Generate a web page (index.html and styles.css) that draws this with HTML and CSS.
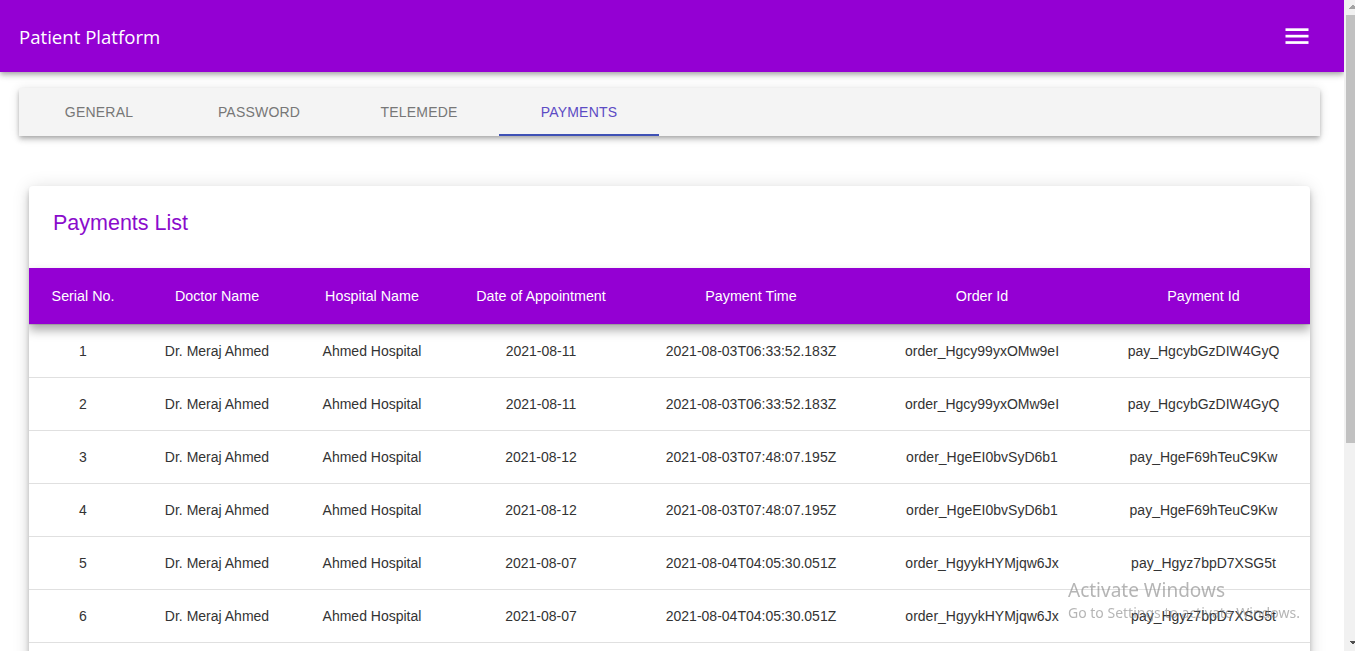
FILE: index.html
```html
<!DOCTYPE html>
<html lang="en">
<head>
<meta charset="utf-8">
<title>Patient Platform</title>
<link rel="stylesheet" href="styles.css">
</head>
<body>
<header class="topbar">
  <div class="brand">Patient Platform</div>
  <button class="menu-btn" aria-label="menu">
    <svg width="24" height="24" viewBox="0 0 24 24"><rect x="0.5" y="5.3" width="23" height="2.7" fill="#fff"/><rect x="0.5" y="11.8" width="23" height="2.7" fill="#fff"/><rect x="0.5" y="18.2" width="23" height="2.7" fill="#fff"/></svg>
  </button>
</header>
<main class="content">
  <nav class="tabs">
    <div class="tab">General</div>
    <div class="tab">Password</div>
    <div class="tab">Telemede</div>
    <div class="tab active">Payments</div>
  </nav>
  <section class="card">
    <h2 class="card-title">Payments List</h2>
    <table class="ptable">
      <colgroup>
        <col class="c1"><col class="c2"><col class="c3"><col class="c4"><col class="c5"><col class="c6"><col class="c7">
      </colgroup>
      <thead>
        <tr><th>Serial No.</th><th>Doctor Name</th><th>Hospital Name</th><th>Date of Appointment</th><th>Payment Time</th><th>Order Id</th><th>Payment Id</th></tr>
      </thead>
      <tbody>
        <tr><td>1</td><td>Dr. Meraj Ahmed</td><td>Ahmed Hospital</td><td>2021-08-11</td><td>2021-08-03T06:33:52.183Z</td><td>order_Hgcy99yxOMw9eI</td><td>pay_HgcybGzDIW4GyQ</td></tr>
        <tr><td>2</td><td>Dr. Meraj Ahmed</td><td>Ahmed Hospital</td><td>2021-08-11</td><td>2021-08-03T06:33:52.183Z</td><td>order_Hgcy99yxOMw9eI</td><td>pay_HgcybGzDIW4GyQ</td></tr>
        <tr><td>3</td><td>Dr. Meraj Ahmed</td><td>Ahmed Hospital</td><td>2021-08-12</td><td>2021-08-03T07:48:07.195Z</td><td>order_HgeEI0bvSyD6b1</td><td>pay_HgeF69hTeuC9Kw</td></tr>
        <tr><td>4</td><td>Dr. Meraj Ahmed</td><td>Ahmed Hospital</td><td>2021-08-12</td><td>2021-08-03T07:48:07.195Z</td><td>order_HgeEI0bvSyD6b1</td><td>pay_HgeF69hTeuC9Kw</td></tr>
        <tr><td>5</td><td>Dr. Meraj Ahmed</td><td>Ahmed Hospital</td><td>2021-08-07</td><td>2021-08-04T04:05:30.051Z</td><td>order_HgyykHYMjqw6Jx</td><td>pay_Hgyz7bpD7XSG5t</td></tr>
        <tr><td>6</td><td>Dr. Meraj Ahmed</td><td>Ahmed Hospital</td><td>2021-08-07</td><td>2021-08-04T04:05:30.051Z</td><td>order_HgyykHYMjqw6Jx</td><td>pay_Hgyz7bpD7XSG5t</td></tr>
        <tr><td>7</td><td>Dr. Meraj Ahmed</td><td>Ahmed Hospital</td><td>2021-08-07</td><td>2021-08-04T04:05:30.051Z</td><td>order_HgyykHYMjqw6Jx</td><td>pay_Hgyz7bpD7XSG5t</td></tr>
        <tr><td>8</td><td>Dr. Meraj Ahmed</td><td>Ahmed Hospital</td><td>2021-08-07</td><td>2021-08-04T04:05:30.051Z</td><td>order_HgyykHYMjqw6Jx</td><td>pay_Hgyz7bpD7XSG5t</td></tr>
      </tbody>
    </table>
  </section>
</main>
<div class="activate">
  <div class="activate-title">Activate Windows</div>
  <div class="activate-sub">Go to Settings to activate Windows.</div>
</div>
<div class="scrollbar" aria-hidden="true">
  <div class="sb-up"></div>
  <div class="sb-thumb"></div>
  <div class="sb-down"></div>
</div>
</body>
</html>
```

FILE: styles.css
```css
* { box-sizing: border-box; }
html, body {
  margin: 0;
  padding: 0;
}
body {
  padding: 0 11px 40px 0;
  background: #fff;
  font-family: "Liberation Sans", Arial, sans-serif;
  color: #333;
}

.topbar {
  height: 72px;
  background: #9400d3;
  display: flex;
  align-items: center;
  justify-content: space-between;
  padding: 0 35px 0 19px;
  box-shadow: 0 2px 4px -1px rgba(0,0,0,.2), 0 4px 5px 0 rgba(0,0,0,.14), 0 1px 10px 0 rgba(0,0,0,.12);
  position: relative;
  z-index: 2;
}
.brand {
  color: #fff;
  font-family: "Open Sans", "Noto Sans", sans-serif;
  font-size: 18.6px;
  font-weight: 500;
}
.menu-btn {
  background: none;
  border: 0;
  padding: 0;
  width: 24px;
  height: 24px;
  display: flex;
  margin-top: -2px;
}
.content {
  padding: 16px 24px 0 19px;
}
.tabs {
  display: flex;
  height: 48px;
  background: #f4f4f4;
  box-shadow: 0 2px 4px -1px rgba(0,0,0,.2), 0 4px 5px 0 rgba(0,0,0,.14), 0 1px 10px 0 rgba(0,0,0,.12);
}
.tab {
  width: 160px;
  display: flex;
  align-items: center;
  justify-content: center;
  text-transform: uppercase;
  font-size: 14px;
  color: #777;
  letter-spacing: 0.2px;
  border-bottom: 2px solid transparent;
  padding-top: 2px;
}
.tab.active {
  color: #5c4bc4;
  border-bottom-color: #3f51b5;
}
.card {
  margin: 50px 10px 0 10px;
  background: #fff;
  border-radius: 4px;
  box-shadow: 0 3px 5px -1px rgba(0,0,0,.2), 0 6px 10px 0 rgba(0,0,0,.14), 0 1px 18px 0 rgba(0,0,0,.12);
  overflow: hidden;
}
.card-title {
  margin: 0;
  height: 82px;
  padding: 25px 24px 0 24px;
  font-size: 21.5px;
  font-weight: normal;
  color: #8a0ccc;
  line-height: 24px;
}
.ptable {
  width: 100%;
  border-collapse: collapse;
  table-layout: fixed;
  font-size: 14px;
}
.c1 { width: 108px; }
.c2 { width: 160px; }
.c3 { width: 150px; }
.c4 { width: 188px; }
.c5 { width: 232px; }
.c6 { width: 230px; }
.c7 { width: 213px; }
.ptable thead tr {
  background: #9400d3;
  box-shadow: 0 6px 10px rgba(0,0,0,.35);
  position: relative;
}
.ptable th {
  height: 56px;
  color: #fff;
  font-weight: normal;
  font-size: 14.3px;
  text-align: center;
  padding: 0 4px;
  border-bottom: 1px solid #e0e0e0;
}
.ptable td {
  height: 53px;
  text-align: center;
  padding: 0 4px;
  color: #333;
  border-bottom: 1px solid #e0e0e0;
}

/* Windows watermark overlay */
.activate {
  position: fixed;
  left: 1068px;
  top: 578px;
  color: rgba(120,120,120,.55);
  font-family: "Noto Sans", "Open Sans", sans-serif;
  pointer-events: none;
  z-index: 5;
}
.activate-title { font-size: 19px; line-height: 24px; }
.activate-sub { font-size: 14px; line-height: 20px; margin-top: 1px; }

/* drawn browser scrollbar (overlays the window's right edge) */
.scrollbar {
  position: fixed;
  top: 0;
  right: 0;
  width: 11px;
  height: 100%;
  background: #f1f1f1;
  display: flex;
  flex-direction: column;
  z-index: 10;
}
.sb-up {
  height: 15px;
  flex: none;
  background-image:
    linear-gradient(to bottom right, transparent 50%, #a3a3a3 50%),
    linear-gradient(to bottom left, transparent 50%, #a3a3a3 50%);
  background-size: 4px 4px, 4px 4px;
  background-position: 5px 5px, 9px 5px;
  background-repeat: no-repeat;
}
.sb-thumb {
  height: 428px;
  flex: none;
  margin-left: 2px;
  background: #c1c1c1;
}
.sb-down {
  margin-top: auto;
  height: 15px;
  flex: none;
  background-image:
    linear-gradient(to top right, transparent 50%, #505050 50%),
    linear-gradient(to top left, transparent 50%, #505050 50%);
  background-size: 4px 4px, 4px 4px;
  background-position: 5px 5px, 9px 5px;
  background-repeat: no-repeat;
}
```
